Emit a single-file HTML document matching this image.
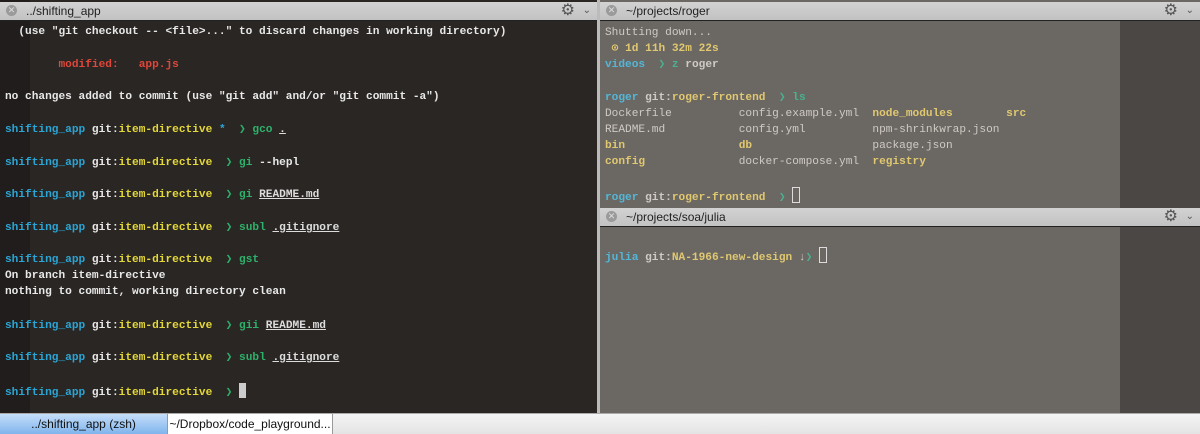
<html><head><style>
body{margin:0;width:1200px;height:434px;overflow:hidden;background:#3a3836;font-family:"Liberation Mono",monospace;font-size:11.15px;font-weight:bold}
.p{position:absolute}
.hd{position:absolute;height:18px;background:linear-gradient(#d2d2d2,#c2c2c2);border-bottom:1px solid #222;font-family:"Liberation Sans",sans-serif;font-weight:normal;font-size:12px;color:#222;line-height:18px}
.hd .x{position:absolute;left:6px;top:3px;width:11px;height:11px;border-radius:50%;background:#9a9a9a;color:#ddd;font-size:9px;line-height:11px;text-align:center}
.hd .t{position:absolute;left:26px}
.hd .g{position:absolute;right:22px;top:0;font-size:16px;color:#555}
.hd .v{position:absolute;right:6px;top:0;font-size:10px;color:#555}
.l{position:absolute;white-space:pre;line-height:16px}
.c{color:#2aa6d6}.w{color:#e8e8e8}.y{color:#e4d836}.gr{color:#2cb26a}.r{color:#e0463a}.u{text-decoration:underline;color:#ddd}
.rc{color:#54b6d6}.ry{color:#e0c870}.rg{color:#4ab090}.rw{color:#cfcac4}
</style></head><body>
<div class="p" style="left:0;top:0;width:597px;height:413px;background:#2a2624"></div>
<div class="p" style="left:0;top:0;width:30px;height:413px;background:#201d1c"></div>
<div class="p" style="left:600px;top:0;width:600px;height:413px;background:#6b6763"></div>
<div class="p" style="left:1120px;top:20px;width:80px;height:393px;background:#4a4745"></div>
<div class="hd" style="left:0;top:2px;width:597px"><span class="x">✕</span><span class="t">../shifting_app</span><span class="g">⚙</span><span class="v">⌄</span></div>
<div class="hd" style="left:600px;top:2px;width:600px"><span class="x">✕</span><span class="t">~/projects/roger</span><span class="g">⚙</span><span class="v">⌄</span></div>
<div class="hd" style="left:600px;top:208px;width:600px"><span class="x">✕</span><span class="t">~/projects/soa/julia</span><span class="g">⚙</span><span class="v">⌄</span></div>
<div class="p" style="left:597px;top:0;width:3px;height:413px;background:#bbb"></div>

<div class="l w" style="left:5px;top:24px">  (use "git checkout -- &lt;file&gt;..." to discard changes in working directory)</div>
<div class="l r" style="left:5px;top:57px">        modified:   app.js</div>
<div class="l w" style="left:5px;top:89px">no changes added to commit (use "git add" and/or "git commit -a")</div>
<div class="l" style="left:5px;top:122px"><span class="c">shifting_app</span> <span class="w">git:</span><span class="y">item-directive</span> <span class="c">*</span>  <span class="gr">❯ gco</span> <span class="u">.</span></div>
<div class="l" style="left:5px;top:155px"><span class="c">shifting_app</span> <span class="w">git:</span><span class="y">item-directive</span>  <span class="gr">❯ gi</span> <span class="w">--hepl</span></div>
<div class="l" style="left:5px;top:187px"><span class="c">shifting_app</span> <span class="w">git:</span><span class="y">item-directive</span>  <span class="gr">❯ gi</span> <span class="u">README.md</span></div>
<div class="l" style="left:5px;top:220px"><span class="c">shifting_app</span> <span class="w">git:</span><span class="y">item-directive</span>  <span class="gr">❯ subl</span> <span class="u">.gitignore</span></div>
<div class="l" style="left:5px;top:252px"><span class="c">shifting_app</span> <span class="w">git:</span><span class="y">item-directive</span>  <span class="gr">❯ gst</span></div>
<div class="l w" style="left:5px;top:268px">On branch item-directive
nothing to commit, working directory clean</div>
<div class="l" style="left:5px;top:318px"><span class="c">shifting_app</span> <span class="w">git:</span><span class="y">item-directive</span>  <span class="gr">❯ gii</span> <span class="u">README.md</span></div>
<div class="l" style="left:5px;top:350px"><span class="c">shifting_app</span> <span class="w">git:</span><span class="y">item-directive</span>  <span class="gr">❯ subl</span> <span class="u">.gitignore</span></div>
<div class="l" style="left:5px;top:383px"><span class="c">shifting_app</span> <span class="w">git:</span><span class="y">item-directive</span>  <span class="gr">❯</span> <span style="display:inline-block;width:7px;height:15px;background:#ccc;vertical-align:-3px"></span></div>

<div class="l rw" style="left:605px;top:25px;font-weight:normal">Shutting down...</div>
<div class="l ry" style="left:605px;top:41px"> ⊙ 1d 11h 32m 22s</div>
<div class="l" style="left:605px;top:57px"><span class="rc">videos</span>  <span class="rg">❯ z</span> <span class="rw">roger</span></div>
<div class="l" style="left:605px;top:90px"><span class="rc">roger</span> <span class="rw">git:</span><span class="ry">roger-frontend</span>  <span class="rg">❯ ls</span></div>
<div class="l rw" style="left:605px;top:106px;font-weight:normal">Dockerfile          config.example.yml  <b class="ry">node_modules</b>        <b class="ry">src</b>
README.md           config.yml          npm-shrinkwrap.json
<b class="ry">bin</b>                 <b class="ry">db</b>                  package.json
<b class="ry">config</b>              docker-compose.yml  <b class="ry">registry</b></div>
<div class="l" style="left:605px;top:187px"><span class="rc">roger</span> <span class="rw">git:</span><span class="ry">roger-frontend</span>  <span class="rg">❯</span> <span style="display:inline-block;width:6px;height:14px;border:1px solid #ddd;vertical-align:-3px"></span></div>
<div class="l" style="left:605px;top:247px"><span class="rc">julia</span> <span class="rw">git:</span><span class="ry">NA-1966-new-design</span> <span class="rw">↓</span><span class="rg">❯</span> <span style="display:inline-block;width:6px;height:14px;border:1px solid #ddd;vertical-align:-3px"></span></div>

<div class="p" style="left:0;top:413px;width:1200px;height:21px;background:linear-gradient(#f4f4f4,#e4e4e4);border-top:1px solid #aaa;box-sizing:border-box"></div>
<div class="p" style="left:0;top:414px;width:167px;height:20px;background:linear-gradient(#c6defa,#7fb4ec);font:12px/20px 'Liberation Sans',sans-serif;text-align:center;color:#111">../shifting_app (zsh)</div>
<div class="p" style="left:167px;top:414px;width:166px;height:20px;background:#fff;border-left:1px solid #999;border-right:1px solid #999;box-sizing:border-box;font:12px/20px 'Liberation Sans',sans-serif;text-align:center;color:#111">~/Dropbox/code_playground...</div>
</body></html>
